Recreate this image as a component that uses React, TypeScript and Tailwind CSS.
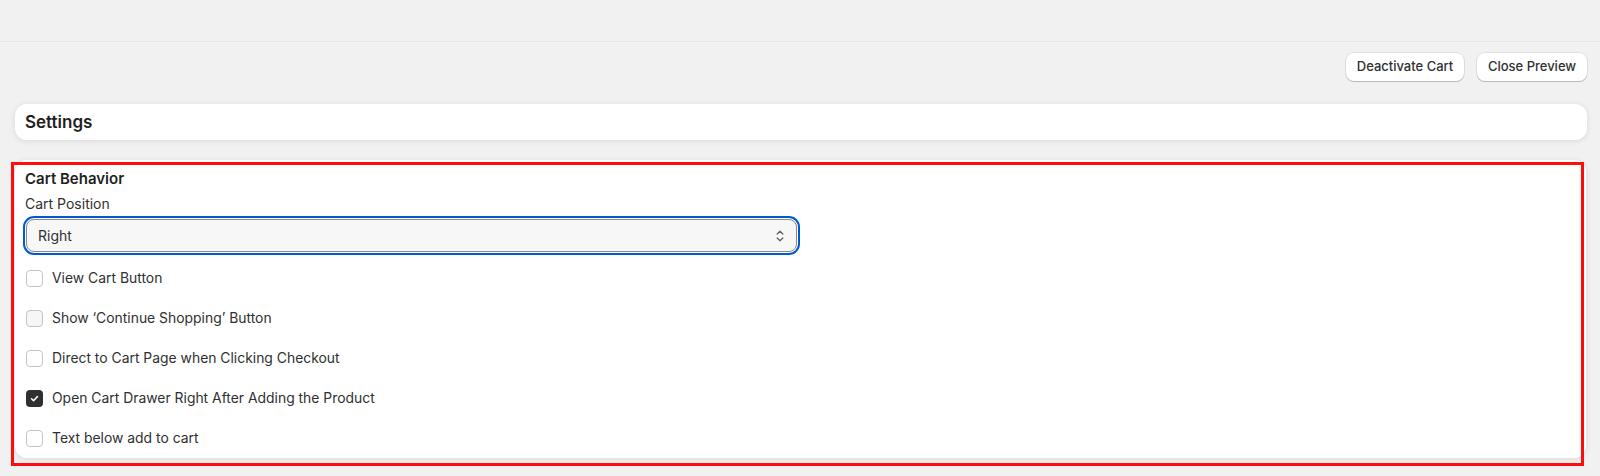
import React from "react";

function Checkbox({ checked, tint }: { checked?: boolean; tint?: boolean }) {
  if (checked) {
    return (
      <span className="flex h-[17px] w-[17px] shrink-0 items-center justify-center rounded-[4px] bg-[#303030]">
        <svg width="11" height="11" viewBox="0 0 12 12" fill="none">
          <path d="M2.8 6.3 L5 8.4 L9.2 3.8" stroke="#ffffff" strokeWidth="1.7" strokeLinecap="round" strokeLinejoin="round" />
        </svg>
      </span>
    );
  }
  return (
    <span
      className={
        "block h-[17px] w-[17px] shrink-0 rounded-[4px] border border-[#c4c4c4] " +
        (tint ? "bg-[#f6f6f6]" : "bg-white")
      }
    />
  );
}

function Row({ label, checked, tint }: { label: string; checked?: boolean; tint?: boolean }) {
  return (
    <div className="flex h-[40px] items-center gap-[9px] pl-[1px]">
      <Checkbox checked={checked} tint={tint} />
      <span className="text-[13.9px] leading-5 text-[#303030]">{label}</span>
    </div>
  );
}

export default function App() {
  return (
    <div
      className="h-[476px] w-full overflow-hidden bg-[#f1f1f1] text-[#303030]"
      style={{ fontFamily: "Inter, 'Noto Sans', Arial, sans-serif" }}
    >
      <div className="h-[42px] border-b border-[#e6e6e6]" />

      <div className="flex justify-end gap-[13px] pr-[13px] pt-[11px]">
        <button className="h-[28px] w-[118px] rounded-[8px] bg-white text-[13px] font-medium text-[#303030] shadow-[0_0_0_1px_rgba(0,0,0,0.07),0_1px_1px_rgba(0,0,0,0.18)]">
          Deactivate Cart
        </button>
        <button className="h-[28px] w-[110px] rounded-[8px] bg-white text-[13px] font-medium text-[#303030] shadow-[0_0_0_1px_rgba(0,0,0,0.07),0_1px_1px_rgba(0,0,0,0.18)]">
          Close Preview
        </button>
      </div>

      <div className="ml-[15px] mr-[13px] mt-[23px] flex h-[36px] items-center rounded-[12px] bg-white pl-[10px] shadow-[0_1px_6px_rgba(0,0,0,0.10)]">
        <span className="text-[17px] font-semibold leading-6 text-[#1f1f1f]">Settings</span>
      </div>

      <div className="relative ml-[15px] mr-[14px] mt-[20px] h-[298px] rounded-[12px] bg-white pl-[10px] pt-[9px] shadow-[0_1px_6px_rgba(0,0,0,0.10)]">
        <div className="text-[15px] font-semibold leading-5 text-[#1f1f1f]">Cart Behavior</div>
        <div className="mt-[5px] text-[14px] leading-5">Cart Position</div>

        <div className="mt-[5px] w-[771px] rounded-[8px] outline outline-2 outline-offset-1 outline-[#005bd3]" style={{ marginLeft: 1 }}>
          <div className="flex h-[33px] items-center justify-between rounded-[8px] border border-[#8a8a8a] bg-[#f7f7f7] pl-[11px] pr-[11px]">
            <span className="text-[14px] leading-5">Right</span>
            <svg width="10" height="16" viewBox="0 0 10 16" fill="none">
              <path d="M2.2 6 L5 3.2 L7.8 6" stroke="#616161" strokeWidth="1.3" strokeLinecap="round" strokeLinejoin="round" />
              <path d="M2.2 10 L5 12.8 L7.8 10" stroke="#616161" strokeWidth="1.3" strokeLinecap="round" strokeLinejoin="round" />
            </svg>
          </div>
        </div>

        <div className="mt-[6px] flex flex-col">
          <Row label="View Cart Button" />
          <Row label="Show ‘Continue Shopping’ Button" tint />
          <Row label="Direct to Cart Page when Clicking Checkout" />
          <Row label="Open Cart Drawer Right After Adding the Product" checked />
          <Row label="Text below add to cart" />
        </div>

        <div className="pointer-events-none absolute left-[-4px] top-[2px] h-[304px] w-[1573px] border-[3px] border-[#ff0d0d]" />
      </div>
    </div>
  );
}
